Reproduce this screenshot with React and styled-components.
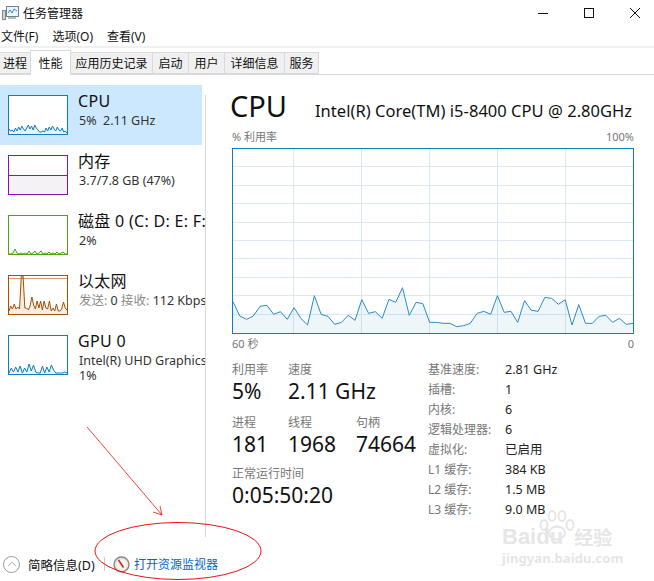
import React from 'react';
import styled, { createGlobalStyle } from 'styled-components';
import { ChevronUp } from 'lucide-react';

const FONT = '"Noto Sans", "Noto Sans CJK SC", sans-serif';

const GlobalStyle = createGlobalStyle`
  html, body { margin: 0; padding: 0; background: #fff; }
  body { font-family: ${FONT}; color: #000; }
`;

const Page = styled.div`
  position: relative;
  width: 654px;
  height: 581px;
  overflow: hidden;
  display: flex;
  flex-direction: column;
  background: #fff;
`;

const TitleBar = styled.div`
  height: 26px;
  display: flex;
  align-items: center;
  justify-content: space-between;
  padding-left: 2px;
`;

const TitleLeft = styled.div`
  display: flex;
  align-items: center;
  gap: 4px;
  font-size: 12px;
  color: #111;
`;

const WindowButtons = styled.div`
  display: flex;
  align-items: center;
  gap: 36px;
  padding-right: 14px;
`;

const MenuBar = styled.div`
  height: 18px;
  padding-top: 2px;
  display: flex;
  align-items: center;
  gap: 14px;
  padding-left: 1px;
  font-size: 12px;
`;

const MenuItem = styled.span`
  line-height: 18px;
  color: #111;
`;

const MenuRule = styled.div`
  height: 2px;
  background: #f0f0f0;
`;

const TabBar = styled.div`
  height: 27px;
  display: flex;
  align-items: flex-end;
  border-bottom: 1px solid #d9d9d9;
  box-sizing: border-box;
`;

const Tab = styled.div`
  box-sizing: border-box;
  width: ${p => p.$w}px;
  height: ${p => (p.$active ? 25 : 22)}px;
  margin-bottom: ${p => (p.$active ? -1 : 0)}px;
  display: flex;
  align-items: center;
  justify-content: center;
  font-size: 12px;
  color: #111;
  background: ${p => (p.$active ? '#fff' : '#f0f0f0')};
  border: 1px solid #d9d9d9;
  border-left: ${p => (p.$first ? 'none' : '1px solid #d9d9d9')};
  border-bottom: ${p => (p.$active ? 'none' : '1px solid #d9d9d9')};
  margin-left: ${p => (p.$first ? 0 : -1)}px;
  position: relative;
  z-index: ${p => (p.$active ? 1 : 0)};
`;

const Body = styled.div`
  display: flex;
  height: 463px;
  padding-top: 10px;
`;

const Sidebar = styled.div`
  width: 205px;
  flex: none;
  overflow: hidden;
`;

const SideRow = styled.div`
  width: 205px;
  height: 60px;
  display: flex;
  align-items: flex-start;
  padding: 10px 0 0 8px;
  box-sizing: border-box;
  background: ${p => (p.$selected ? 'linear-gradient(to right, #cce8ff 202px, transparent 202px)' : 'transparent')};
`;

const SideText = styled.div`
  margin-left: 10px;
  white-space: nowrap;
  margin-top: -4px;
`;

const SideTitle = styled.div`
  font-size: 16px;
  letter-spacing: 0.3px;
  line-height: 20px;
  margin-bottom: 2px;
  color: #111;
`;

const SideSub = styled.div`
  font-size: 12.5px;
  line-height: 15px;
  margin-left: 1px;
  white-space: pre;
  color: #333;
`;

const Dim = styled.span`
  color: #8a8a8a;
`;

const Divider = styled.div`
  width: 1px;
  flex: none;
  height: 442px;
  margin-top: 10px;
  background: #d9d9d9;
`;

const Main = styled.div`
  flex: 1;
  padding: 0 20px 0 25px;
  min-width: 0;
`;

const Heading = styled.div`
  display: flex;
  align-items: baseline;
  height: 42px;
  white-space: nowrap;
`;

const BigTitle = styled.div`
  font-size: 29px;
  line-height: 42px;
  width: 85px;
  margin-left: -1px;
  color: #111;
`;

const ModelName = styled.div`
  font-size: 16.5px;
  letter-spacing: 0.03px;
  color: #111;
`;

const ChartCaption = styled.div`
  display: flex;
  justify-content: space-between;
  font-size: 11px;
  line-height: 14px;
  color: #777;
  height: ${p => p.$h}px;
  padding-left: 1px;
  padding-top: ${p => p.$top || 0}px;
`;

const ChartFrame = styled.svg`
  display: block;
  width: 402px;
  height: 186px;
  margin-left: 1px;
`;

const Stats = styled.div`
  display: flex;
  margin-top: 11px;
  padding-left: 1px;
`;

const LeftStats = styled.div`
  width: 196px;
  flex: none;
`;

const StatLine = styled.div`
  display: flex;
  margin-bottom: 10px;

  &:nth-child(2) {
    margin-bottom: 8px;
  }
`;

const Stat = styled.div`
  width: ${p => p.$w}px;
  white-space: nowrap;
`;

const StatLabel = styled.div`
  font-size: 12px;
  line-height: 16px;
  color: #777;
`;

const StatValue = styled.div`
  font-size: 21px;
  line-height: 27px;
  color: #111;
`;

const InfoGrid = styled.div`
  display: grid;
  grid-template-columns: 77px 1fr;
  grid-auto-rows: 20px;
  font-size: 12px;
  line-height: 20px;
  margin-top: -2px;
`;

const InfoLabel = styled.div`
  color: #777;
  white-space: nowrap;
`;

const InfoValue = styled.div`
  color: #222;
  font-size: 12.5px;
`;

const Footer = styled.div`
  height: 32px;
  display: flex;
  align-items: center;
  padding-left: 3px;
  font-size: 12.5px;
`;

const CollapseButton = styled.div`
  width: 17px;
  height: 17px;
  box-sizing: border-box;
  border: 1px solid #9a9a9a;
  border-radius: 50%;
  display: flex;
  align-items: center;
  justify-content: center;
  color: #9a9a9a;
`;

const FooterText = styled.span`
  margin-left: 8px;
  width: 76px;
  color: #111;
  white-space: nowrap;
`;

const FooterRule = styled.div`
  width: 1px;
  height: 14px;
  margin-right: 8px;
  background: #ccc;
`;

const MonitorLink = styled.span`
  margin-left: 4px;
  font-size: 12px;
  color: #0066cc;
`;

const Overlay = styled.svg`
  position: absolute;
  left: 0;
  top: 0;
  pointer-events: none;
`;

const Watermark = styled.div`
  position: absolute;
  left: 502px;
  top: 523px;
  width: 120px;
  color: #e6e6e6;
  pointer-events: none;
  white-space: nowrap;
`;

const WatermarkLogo = styled.div`
  display: flex;
  align-items: center;
  gap: 11px;
  font-size: 22px;
  font-weight: 700;
  line-height: 28px;
  font-family: "Liberation Sans", sans-serif;
`;

const WatermarkSite = styled.div`
  font-size: 13px;
  font-weight: 700;
  line-height: 14px;
  letter-spacing: 0.1px;
`;

const WatermarkCn = styled.span`
  font-size: 19px;
  font-family: "Noto Sans CJK SC", sans-serif;
`;

const WatermarkPaw = styled.svg`
  position: absolute;
  left: 35px;
  top: -13px;
`;

const tabs = [
  { label: '进程', w: 31, first: true },
  { label: '性能', w: 41, active: true },
  { label: '应用历史记录', w: 83 },
  { label: '启动', w: 37 },
  { label: '用户', w: 37 },
  { label: '详细信息', w: 61 },
  { label: '服务', w: 35 }
];

// graph points read off the screenshot: x, y in page coordinates
const cpuPoints = [
  65, 108, 118, 108, 79, 76, 103, 95, 118, 83, 115, 135, 47, 103, 109, 133, 127, 106, 121, 59,
  100, 95, 115, 58, 67, 23, 106, 67, 71, 127, 127, 130, 130, 140, 137, 130, 100, 94, 103, 47,
  97, 94, 127, 62, 91, 94, 52, 55, 73, 59, 135, 74, 130, 130, 109, 106, 127, 115, 133, 130
].map((v, i) => [1 + (i * 400) / 59, v / 3 + 280 - 148]);

const cpuLine = cpuPoints.map(p => p.join(',')).join(' ');

const thumbs = {
  cpu: [34, 36, 35, 37, 33, 36, 32, 35, 31, 34, 36, 33, 30, 34, 31, 35, 30, 33, 35, 37, 37, 36, 37, 33, 36, 32, 35, 31, 34, 36, 32, 35, 36, 33, 37, 36, 38],
  disk: [39, 39, 38, 34, 38, 39, 38, 39, 38, 39, 36, 39, 38, 36, 39, 38, 36, 39, 38, 39, 37, 39, 38, 39, 37, 39, 38, 37, 39, 39],
  net: [36, 31, 34, 29, 34, 32, 34, 1, 1, 33, 33, 35, 31, 22, 30, 34, 26, 33, 26, 35, 26, 33, 34, 26, 36, 33, 36, 29, 36, 36, 34, 27, 33, 35],
  gpu: [38, 33, 37, 32, 37, 31, 38, 33, 37, 29, 36, 30, 37, 38, 38, 31, 38, 32, 37, 30, 35, 38, 38, 38, 38, 37, 38]
};

const thumbLine = values => values.map((v, i) => `${1 + (i * 58) / (values.length - 1)},${v}`).join(' ');

const Thumb = ({ color, values, memory, netCap }) => (
  <svg width="60" height="40" style={{ flex: 'none', display: 'block', background: '#fff' }}>
    {memory && <rect x="1" y="21" width="58" height="18" fill="#f4f2f4" />}
    {memory && <line x1="1" y1="20.5" x2="59" y2="20.5" stroke={color} />}
    {values && <polygon points={`1,39 ${thumbLine(values)} 59,39`} fill={color} fillOpacity="0.1" />}
    {values && <polyline points={thumbLine(values)} fill="none" stroke={color} strokeWidth="1" />}
    {netCap && <line x1="1" y1="3.5" x2="59" y2="3.5" stroke={color} strokeOpacity="0.55" />}
    <rect x="0.5" y="0.5" width="59" height="39" fill="none" stroke={color} />
  </svg>
);

const sideItems = [
  { title: 'CPU', sub: '5%  2.11 GHz', color: '#117dbb', values: thumbs.cpu, selected: true },
  { title: '内存', sub: '3.7/7.8 GB (47%)', color: '#8b12ae', memory: true },
  { title: '磁盘 0 (C: D: E: F:', sub: '2%', color: '#4da60c', values: thumbs.disk },
  { title: '以太网', sub: <><Dim>发送:</Dim> 0 <Dim>接收:</Dim> 112 Kbps</>, color: '#a74f01', values: thumbs.net, netCap: true },
  { title: 'GPU 0', sub: 'Intel(R) UHD Graphics', extra: '1%', color: '#117dbb', values: thumbs.gpu }
];

const infoRows = [
  ['基准速度:', '2.81 GHz'],
  ['插槽:', '1'],
  ['内核:', '6'],
  ['逻辑处理器:', '6'],
  ['虚拟化:', '已启用'],
  ['L1 缓存:', '384 KB'],
  ['L2 缓存:', '1.5 MB'],
  ['L3 缓存:', '9.0 MB']
];

const AppIcon = () => (
  <svg width="17" height="16" viewBox="0 0 17 16">
    <rect x="0.5" y="5.5" width="3" height="9" fill="#cfd6cf" stroke="#7f8a80" />
    <rect x="4.5" y="1.5" width="12" height="10" fill="#eef5fa" stroke="#6c8192" />
    <polyline points="6,8 8,5 10,8 12,4 15,6" fill="none" stroke="#2f8fc0" />
    <rect x="6" y="12" width="8" height="2" fill="#b7bfc4" />
  </svg>
);

const MonitorIcon = () => (
  <svg width="17" height="17" viewBox="0 0 17 17">
    <circle cx="8.5" cy="8.5" r="7.5" fill="#e9e6e0" stroke="#8b8880" strokeWidth="1.4" />
    <circle cx="8.5" cy="8.5" r="5" fill="#faf8f4" />
    <line x1="5.5" y1="4" x2="10.5" y2="11.5" stroke="#c9252a" strokeWidth="1.6" />
  </svg>
);

export default function App() {
  return (
    <Page>
      <GlobalStyle />
      <TitleBar>
        <TitleLeft>
          <AppIcon />
          任务管理器
        </TitleLeft>
        <WindowButtons>
          <svg width="10" height="10"><line x1="0" y1="5.5" x2="10" y2="5.5" stroke="#111" /></svg>
          <svg width="10" height="10"><rect x="0.5" y="0.5" width="9" height="9" fill="none" stroke="#111" /></svg>
          <svg width="10" height="10"><path d="M0 0L10 10M10 0L0 10" stroke="#111" /></svg>
        </WindowButtons>
      </TitleBar>
      <MenuBar>
        <MenuItem>文件(F)</MenuItem>
        <MenuItem>选项(O)</MenuItem>
        <MenuItem>查看(V)</MenuItem>
      </MenuBar>
      <MenuRule />
      <TabBar>
        {tabs.map(t => (
          <Tab key={t.label} $w={t.w} $active={t.active} $first={t.first}>{t.label}</Tab>
        ))}
      </TabBar>
      <Body>
        <Sidebar>
          {sideItems.map(item => (
            <SideRow key={item.title} $selected={item.selected}>
              <Thumb color={item.color} values={item.values} memory={item.memory} netCap={item.netCap} />
              <SideText>
                <SideTitle>{item.title}</SideTitle>
                <SideSub>{item.sub}</SideSub>
                {item.extra && <SideSub>{item.extra}</SideSub>}
              </SideText>
            </SideRow>
          ))}
        </Sidebar>
        <Divider />
        <Main>
          <Heading>
            <BigTitle>CPU</BigTitle>
            <ModelName>Intel(R) Core(TM) i5-8400 CPU @ 2.80GHz</ModelName>
          </Heading>
          <ChartCaption $h={18} $top={3}><span>% 利用率</span><span>100%</span></ChartCaption>
          <ChartFrame viewBox="0 0 402 186">
            {[1, 2, 3, 4, 5, 6, 7, 8, 9].map(i => (
              <line key={i} x1="1" x2="401" y1={Math.round(i * 18.4) + 0.5} y2={Math.round(i * 18.4) + 0.5} stroke="#d9eaf4" />
            ))}
            {[61, 129, 197, 265, 333].map(x => (
              <line key={x} x1={x + 0.5} x2={x + 0.5} y1="1" y2="185" stroke="#d9eaf4" />
            ))}
            <polygon points={`1,185 ${cpuLine} 401,185`} fill="#117dbb" fillOpacity="0.07" />
            <polyline points={cpuLine} fill="none" stroke="#2a8cc4" strokeWidth="1" />
            <rect x="0.5" y="0.5" width="401" height="185" fill="none" stroke="#117dbb" />
          </ChartFrame>
          <ChartCaption $h={14} $top={3}><span>60 秒</span><span>0</span></ChartCaption>
          <Stats>
            <LeftStats>
              <StatLine>
                <Stat $w={56}><StatLabel>利用率</StatLabel><StatValue>5%</StatValue></Stat>
                <Stat $w={140}><StatLabel>速度</StatLabel><StatValue>2.11 GHz</StatValue></Stat>
              </StatLine>
              <StatLine>
                <Stat $w={56}><StatLabel>进程</StatLabel><StatValue>181</StatValue></Stat>
                <Stat $w={68}><StatLabel>线程</StatLabel><StatValue>1968</StatValue></Stat>
                <Stat $w={72}><StatLabel>句柄</StatLabel><StatValue>74664</StatValue></Stat>
              </StatLine>
              <StatLine>
                <Stat $w={196}><StatLabel>正常运行时间</StatLabel><StatValue>0:05:50:20</StatValue></Stat>
              </StatLine>
            </LeftStats>
            <InfoGrid>
              {infoRows.map(([label, value]) => (
                <React.Fragment key={label}>
                  <InfoLabel>{label}</InfoLabel>
                  <InfoValue>{value}</InfoValue>
                </React.Fragment>
              ))}
            </InfoGrid>
          </Stats>
        </Main>
      </Body>
      <Footer>
        <CollapseButton><ChevronUp size={14} strokeWidth={1.5} /></CollapseButton>
        <FooterText>简略信息(D)</FooterText>
        <FooterRule />
        <MonitorIcon />
        <MonitorLink>打开资源监视器</MonitorLink>
      </Footer>

      <Watermark>
        <WatermarkPaw width="40" height="32" viewBox="0 0 40 32">
          <ellipse cx="7" cy="15" rx="3.5" ry="5" fill="none" stroke="#e6e6e6" strokeWidth="2" />
          <ellipse cx="15" cy="6" rx="3.5" ry="5" fill="none" stroke="#e6e6e6" strokeWidth="2" />
          <ellipse cx="25" cy="6" rx="3.5" ry="5" fill="none" stroke="#e6e6e6" strokeWidth="2" />
          <ellipse cx="33" cy="15" rx="3.5" ry="5" fill="none" stroke="#e6e6e6" strokeWidth="2" />
          <ellipse cx="20" cy="23" rx="8" ry="6.5" fill="none" stroke="#e6e6e6" strokeWidth="2" />
        </WatermarkPaw>
        <WatermarkLogo>Baidu<WatermarkCn>经验</WatermarkCn></WatermarkLogo>
        <WatermarkSite>jingyan.baidu.com</WatermarkSite>
      </Watermark>

      <Overlay width="654" height="581" viewBox="0 0 654 581">
        <line x1="87" y1="427" x2="162" y2="515" stroke="#f01010" strokeWidth="0.8" />
        <path d="M153 512L162 515L160 506" fill="none" stroke="#f01010" strokeWidth="0.8" />
        <ellipse cx="178" cy="551" rx="83" ry="28.5" fill="none" stroke="#f01010" strokeWidth="1" />
      </Overlay>
    </Page>
  );
}
